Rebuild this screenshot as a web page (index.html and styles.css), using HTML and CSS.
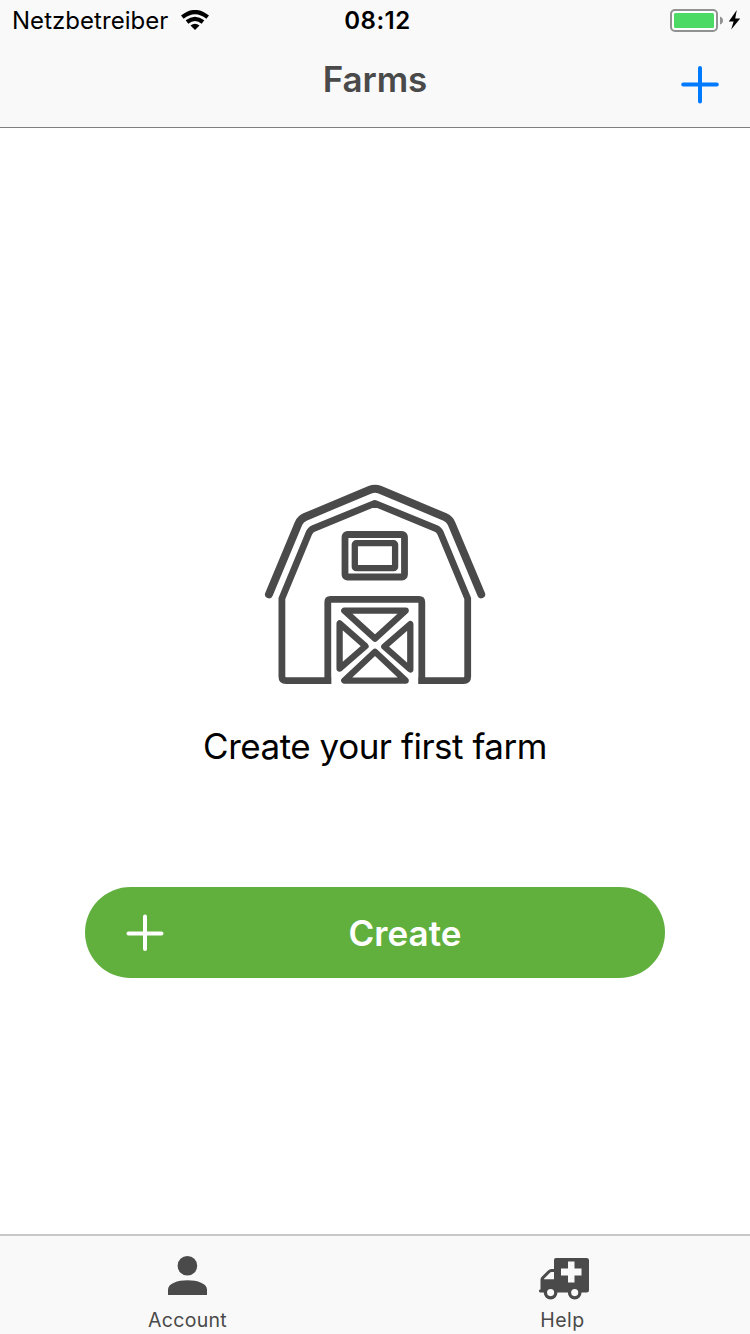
FILE: index.html
```html
<!DOCTYPE html>
<html lang="en">
<head>
<meta charset="utf-8">
<title>Farms</title>
<link rel="stylesheet" href="styles.css">
</head>
<body>
<div class="app">
  <header class="header">
    <div class="status">
      <div class="status-left">
        <span class="carrier">Netzbetreiber</span>
        <svg class="wifi" width="28" height="20" viewBox="181 10 28 20"><g fill="none" stroke="#000" stroke-width="4.200"><path d="M182.300 17.200Q195 6.900 207.700 17.200"/><path d="M187 22Q195 15.600 203 22"/></g><path d="M190.500 25.600Q195 21.800 199.500 25.600L195 30Z"/></svg>
      </div>
      <span class="clock">08:12</span>
      <svg class="battery" width="72" height="26" viewBox="669 8 72 26"><rect x="671" y="10" width="46" height="21" rx="4" fill="#fff" stroke="#929292" stroke-width="2"/><rect x="674" y="13" width="40" height="15" rx="1.500" fill="#4cd964"/><path d="M720 16.500Q723 17.500 723 20.500T720 24.500Z" fill="#929292"/><path d="M736.800 10L728.800 21.500H733.600L731.200 29.500L740.200 18.600H735.200Z"/></svg>
    </div>
    <div class="nav">
      <h1 class="title">Farms</h1>
      <svg class="add" width="38" height="38" viewBox="0 0 38 38"><path d="M19 2V35.500M2.200 18.500H35.800" stroke="#007aff" stroke-width="4" stroke-linecap="round"/></svg>
    </div>
  </header>

  <main class="content">
    <svg class="barn" width="240" height="209" viewBox="255 475 240 209">
      <g fill="none" stroke="#4a4a4a" stroke-linecap="round" stroke-linejoin="round">
        <path stroke-width="8" d="M269 594.300L298.500 523.500Q300.500 519 305 517L370 489.700Q375 487.600 380 489.700L445 517Q449.500 519 451.500 523.500L481.200 594.300"/>
        <g stroke-width="6.800">
          <path stroke-linecap="butt" d="M331.200 680.600H286Q281.900 680.600 281.900 676.500V598.500L309 533Q310.500 529.700 313.500 528.500L374.800 503.300L436 528.500Q439 529.700 440.500 533L467.700 598.500V676.500Q467.700 680.600 463.600 680.600H418.500"/>
          <path stroke-linecap="butt" d="M327.800 684V602Q327.800 599.300 330.500 599.300H419Q421.800 599.300 421.800 602V684"/>
          <rect x="345" y="534.500" width="59.500" height="42.500" rx="2.500"/>
        </g>
        <g stroke-width="6.300">
          <rect x="354.800" y="543.200" width="40.300" height="25" rx="1.500"/>
          <path d="M344.300 610.700H405.700L375 638.700Z"/>
          <path d="M339.600 623.300V668.600L365.500 646.200Z"/>
          <path d="M410.300 624V669.500L384.300 646.700Z"/>
          <path d="M375 651.700L344.300 680.600H405.700Z"/>
        </g>
      </g>
    </svg>
    <p class="message">Create your first farm</p>
    <button class="create">
      <svg class="create-icon" width="38" height="38" viewBox="0 0 38 38"><path d="M19 2.500V35M2.500 19.500H35.500" stroke="#fff" stroke-width="4" stroke-linecap="round"/></svg>
      <span class="create-label">Create</span>
    </button>
  </main>

  <nav class="tabs">
    <a class="tab">
      <svg class="tab-icon" width="60" height="50" viewBox="158 1252 60 50" fill="#4a4a4a"><circle cx="187.400" cy="1265.800" r="9.800"/><path d="M168 1295V1289.500C168 1283.500 177.500 1280.200 187.500 1280.200S207 1283.500 207 1289.500V1295Z"/></svg>
      <span class="label-account">Account</span>
    </a>
    <a class="tab">
      <svg class="tab-icon" width="60" height="50" viewBox="533 1252 60 50" fill="#4a4a4a"><path d="M556 1258H586.500Q589 1258 589 1260.500V1290Q589 1292.500 586.500 1292.500H540.500Q539 1292.500 539 1291V1290.500Q539 1289.500 540.500 1289.500V1279.500Q540.500 1278 541.500 1277L548 1270.500Q549.500 1269 551.500 1269H554V1260Q554 1258 556 1258Z"/><path fill="#f9f9f9" d="M551.500 1272H554V1279.200H544V1278.800L550.200 1272.600Q550.800 1272 551.500 1272ZM568 1261.500H574.500V1268.500H581.500V1275.500H574.500V1282.500H568V1275.500H561V1268.500H568Z"/><g fill="#f9f9f9" stroke="#4a4a4a" stroke-width="3.300"><circle cx="550.600" cy="1292.600" r="5.200"/><circle cx="574.700" cy="1292.600" r="5.200"/></g></svg>
      <span class="label-help">Help</span>
    </a>
  </nav>
</div>
</body>
</html>
```
FILE: styles.css
```css
* { box-sizing: border-box; }
body { margin: 0; background: #fff; font-family: Inter, "Liberation Sans", sans-serif; color: #000; }
.app { width: 750px; height: 1334px; display: flex; flex-direction: column; overflow: hidden; }
svg { display: block; flex: none; }

.header { height: 128px; flex: none; background: #f9f9f9; border-bottom: 1px solid #808080; }
.status { height: 40px; display: grid; grid-template-columns: 1fr auto 1fr; align-items: center; padding: 2px 9px 0 12px; font-size: 24px; line-height: 38px; }
.status-left { display: flex; align-items: center; gap: 13px; }
.wifi { margin-top: -2px; }
.carrier { font-size: 24px; letter-spacing: 0.04px; white-space: nowrap; }
.clock { font-weight: 600; letter-spacing: 0.5px; padding-left: 2px; }
.battery { justify-self: end; }
.nav { height: 87px; display: grid; grid-template-columns: 1fr auto 1fr; padding: 0 31px; }
.title { grid-column: 2; margin: 15px 0 0; font-size: 35px; line-height: 48px; font-weight: 600; color: #4a4a4a; letter-spacing: -0.1px; }
.add { justify-self: end; margin-top: 26px; }

.content { flex: 1; display: flex; flex-direction: column; align-items: center; padding-top: 347px; }
.barn { margin-bottom: 38px; }
.message { margin: 0; font-size: 35px; line-height: 48px; letter-spacing: -0.48px; white-space: nowrap; }
.create { margin-top: 117px; width: 580px; height: 91px; border: 0; border-radius: 46px; padding: 0 41px; background: #61b03e; color: #fff; font: 600 35px/48px Inter, "Liberation Sans", sans-serif; display: flex; align-items: center; }
.create-label { flex: 1; text-align: center; padding-left: 22px; letter-spacing: 0.05px; }

.tabs { height: 100px; flex: none; display: grid; grid-template-columns: 1fr 1fr; background: #f9f9f9; border-top: 2px solid #c8c8c8; color: #4a4a4a; font-size: 19.5px; line-height: 26px; }
.tab { display: flex; flex-direction: column; align-items: center; padding-top: 16px; gap: 5px; }
.label-account { letter-spacing: 0.3px; }
.label-help { letter-spacing: 0.45px; }
```
